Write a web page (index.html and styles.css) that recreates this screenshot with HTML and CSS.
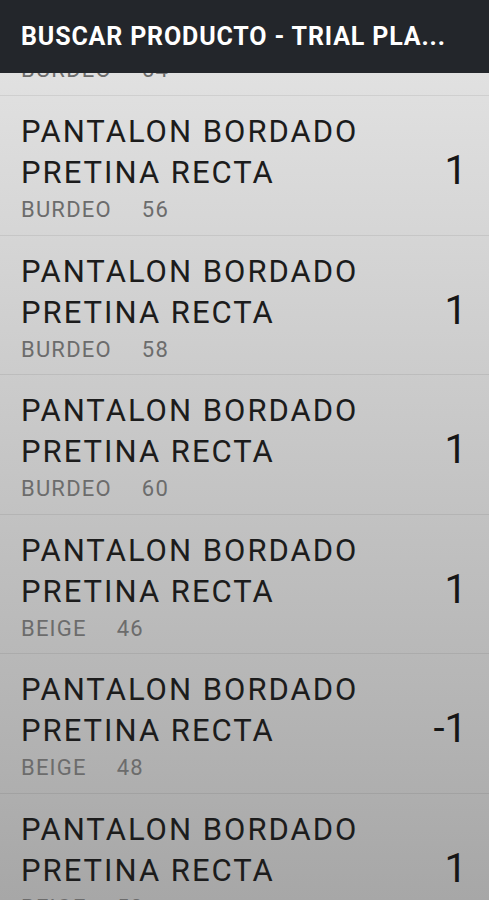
FILE: index.html
```html
<!DOCTYPE html>
<html lang="es">
<head>
    <meta charset="UTF-8">
    <meta name="viewport" content="width=device-width, initial-scale=1.0">
    <title>Buscar producto</title>
    <link rel="stylesheet" href="styles.css">
</head>
<body>
    <header class="toolbar">
        <h1 class="toolbarTitle">BUSCAR PRODUCTO - TRIAL PLA...</h1>
    </header>

    <ul class="productList">
        <li class="product">
            <div class="info">
                <p class="name">PANTALON BORDADO PRETINA RECTA</p>
                <p class="variant"><span class="color">BURDEO</span><span class="size">54</span></p>
            </div>
            <p class="qty">1</p>
        </li>
        <li class="product">
            <div class="info">
                <p class="name">PANTALON BORDADO PRETINA RECTA</p>
                <p class="variant"><span class="color">BURDEO</span><span class="size">56</span></p>
            </div>
            <p class="qty">1</p>
        </li>
        <li class="product">
            <div class="info">
                <p class="name">PANTALON BORDADO PRETINA RECTA</p>
                <p class="variant"><span class="color">BURDEO</span><span class="size">58</span></p>
            </div>
            <p class="qty">1</p>
        </li>
        <li class="product">
            <div class="info">
                <p class="name">PANTALON BORDADO PRETINA RECTA</p>
                <p class="variant"><span class="color">BURDEO</span><span class="size">60</span></p>
            </div>
            <p class="qty">1</p>
        </li>
        <li class="product">
            <div class="info">
                <p class="name">PANTALON BORDADO PRETINA RECTA</p>
                <p class="variant"><span class="color">BEIGE</span><span class="size">46</span></p>
            </div>
            <p class="qty">1</p>
        </li>
        <li class="product">
            <div class="info">
                <p class="name">PANTALON BORDADO PRETINA RECTA</p>
                <p class="variant"><span class="color">BEIGE</span><span class="size">48</span></p>
            </div>
            <p class="qty">-1</p>
        </li>
        <li class="product">
            <div class="info">
                <p class="name">PANTALON BORDADO PRETINA RECTA</p>
                <p class="variant"><span class="color">BEIGE</span><span class="size">50</span></p>
            </div>
            <p class="qty">1</p>
        </li>
    </ul>
</body>
</html>
```

FILE: styles.css
```css
html, body {
    margin: 0;
    height: 100%;
    overflow: hidden;
}
body {
    font-family: Roboto, "Noto Sans", sans-serif;
    background: linear-gradient(to bottom, #e6e6e6 0px, #a7a7a7 900px);
}
.toolbar {
    position: relative;
    z-index: 1;
    height: 73px;
    display: flex;
    align-items: center;
    padding: 0 21px;
    background-color: #23262b;
}
.toolbarTitle {
    margin: 0;
    font-size: 25px;
    font-weight: 700;
    letter-spacing: 0.85px;
    color: #ffffff;
    white-space: nowrap;
}
.productList {
    list-style: none;
    margin: -116.6px 0 0 0;
    padding: 0;
}
.product {
    display: flex;
    align-items: center;
    padding: 15px 22px 10.6px 21px;
    border-bottom: 1px solid rgba(0, 0, 0, 0.07);
}
.info {
    flex: 1;
}
.name {
    margin: 0;
    width: 360px;
    font-size: 31px;
    line-height: 41px;
    letter-spacing: 2px;
    color: #1c1c1c;
}
.variant {
    margin: 3px 0 0 0;
    font-size: 22px;
    line-height: 28px;
    letter-spacing: 1.2px;
    color: #6c6c6c;
}
.size {
    margin-left: 30px;
}
.qty {
    margin: 6px 0 0 0;
    font-size: 40px;
    color: #161616;
}
```
